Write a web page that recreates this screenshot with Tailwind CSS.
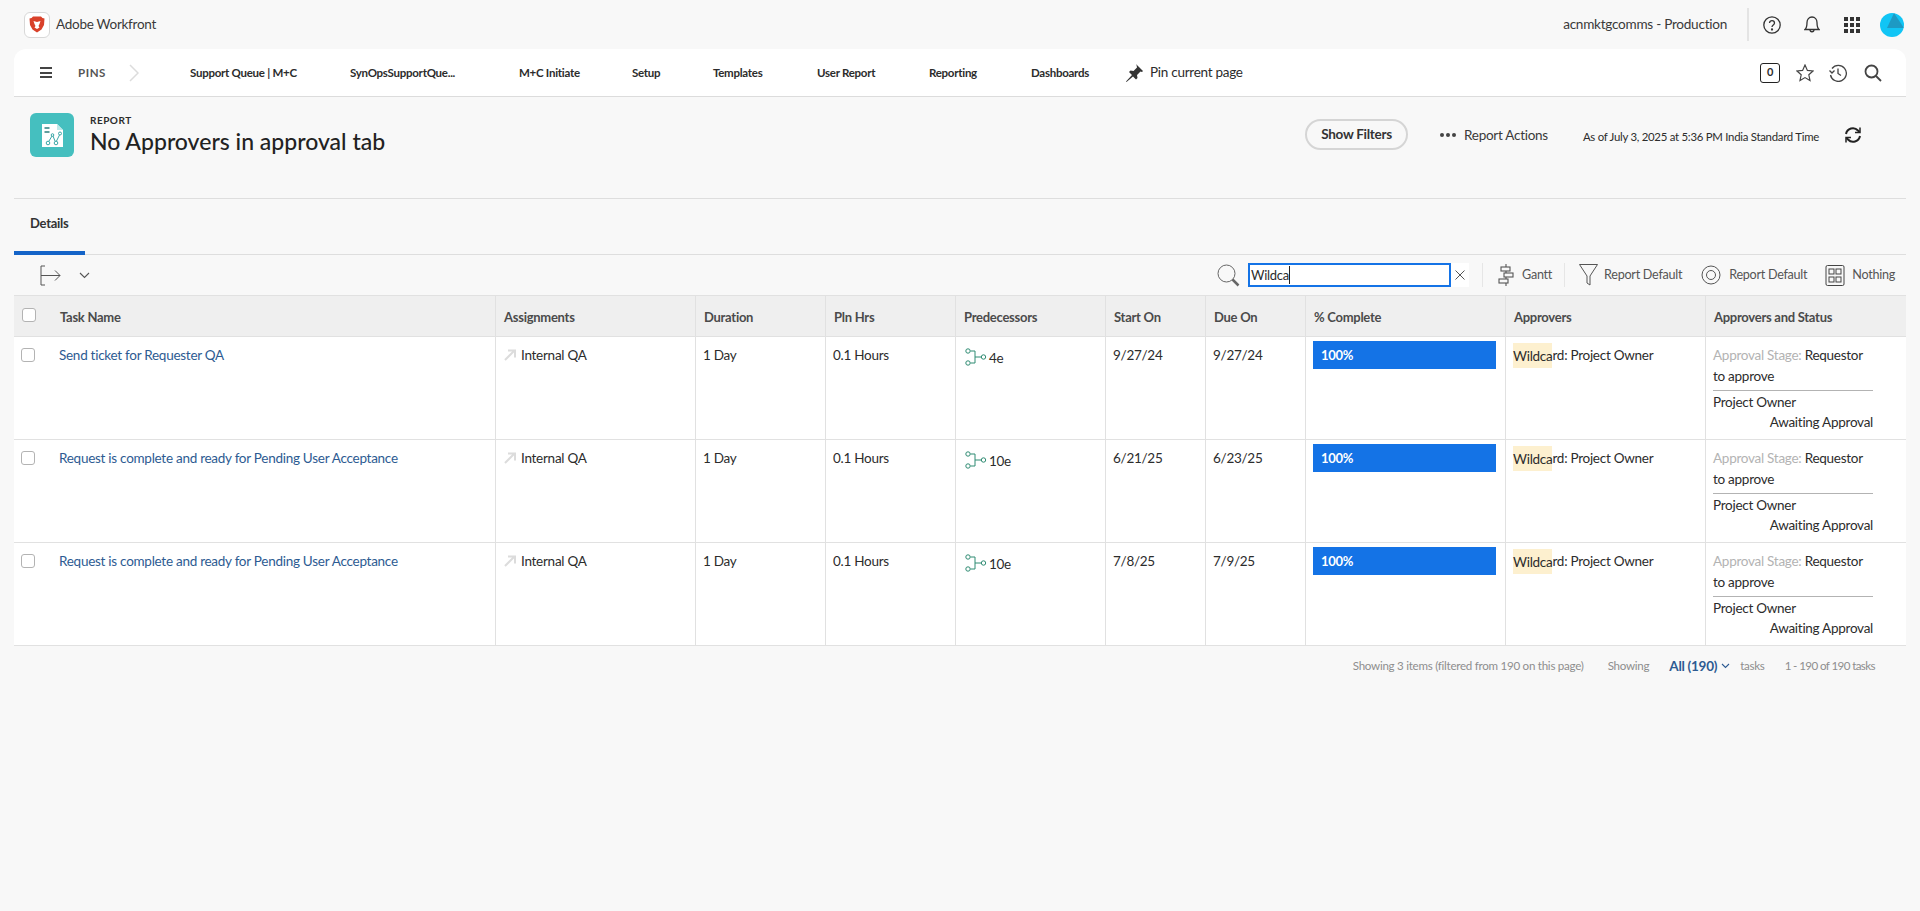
<!DOCTYPE html>
<html lang="en">

<head>
    <meta charset="UTF-8">
    <meta name="viewport" content="width=device-width, initial-scale=1.0">
    <title>No Approvers in approval tab</title>
    <script src="https://cdn.jsdelivr.net/npm/@tailwindcss/browser@4"></script>
</head>

<body class="h-[911px] overflow-hidden bg-[#f8f8f8] font-['Lato',sans-serif] tracking-[-0.27px] text-[#2c2c2c]">
    <!-- top bar -->
    <header class="h-[49px] flex items-center pl-6 pr-[16px]">
        <div class="w-[26px] h-[26px] rounded-md border border-[#d8d8d8] bg-white flex items-center justify-center">
            <svg width="16" height="17" viewBox="0 0 16 17"><path d="M4 .5h8l1.500 1.500 2 .5-.5 6.500-2.500 4.500L8 16.500 3.500 13.500 1 9 .5 2.500l2-.5z" fill="#d9412a"/><path d="M4.500 5l3.500 1 3.500-1-1 3-1 2 1 1.500-2.500 1.500-2.500-1.500 1-1.500-1-2z" fill="#fff"/></svg>
        </div>
        <span class="ml-[6px] text-[13.500px] text-[#3a3a3a]">Adobe Workfront</span>
        <span class="ml-auto text-[13.600px] text-[#3a3a3a]">acnmktgcomms - Production</span>
        <span class="w-[2px] h-[33px] bg-[#e4e4e4] ml-5"></span>
        <svg class="ml-[14px]" width="18" height="18" viewBox="0 0 18 18" fill="none" stroke="#333" stroke-width="1.300"><circle cx="9" cy="9" r="8.200"/><path d="M6.500 7c0-3.300 5-3.300 5 0 0 2-2.500 2-2.500 4"/><circle cx="9" cy="13.500" r=".5" fill="#333"/></svg>
        <svg class="ml-[23px]" width="16" height="17" viewBox="0 0 16 17" fill="none" stroke="#333" stroke-width="1.300"><path d="M1 13.500c2-2 2-4 2-7 0-3 2-5.500 5-5.500s5 2.500 5 5.500c0 3 0 5 2 7z"/><path d="M6 13.500c0 3 4 3 4 0"/></svg>
        <div class="ml-[24px] grid grid-cols-3 gap-[2px]">
            <span class="w-[4px] h-[4px] bg-[#333]"></span><span class="w-[4px] h-[4px] bg-[#333]"></span><span class="w-[4px] h-[4px] bg-[#333]"></span>
            <span class="w-[4px] h-[4px] bg-[#333]"></span><span class="w-[4px] h-[4px] bg-[#333]"></span><span class="w-[4px] h-[4px] bg-[#333]"></span>
            <span class="w-[4px] h-[4px] bg-[#333]"></span><span class="w-[4px] h-[4px] bg-[#333]"></span><span class="w-[4px] h-[4px] bg-[#333]"></span>
        </div>
        <svg class="ml-[20px]" width="24" height="24" viewBox="0 0 24 24"><clipPath id="avatar-clip"><circle cx="12" cy="12" r="12"/></clipPath><circle cx="12" cy="12" r="12" fill="#11c5f5"/><path d="M14 0l10 15H7z" fill="#1d9ac4" clip-path="url(#avatar-clip)"/></svg>
    </header>

    <main class="mx-[14px]">
        <!-- pins nav -->
        <nav class="h-[48px] bg-white rounded-t-xl border-b border-[#dcdcdc] flex items-center pl-[26px] pr-6">
            <div class="w-3 flex flex-col gap-[2.500px]">
                <span class="h-[2px] bg-[#444]"></span><span class="h-[2px] bg-[#444]"></span><span class="h-[2px] bg-[#444]"></span>
            </div>
            <span class="ml-[26px] text-[11.500px] font-bold tracking-wider text-[#555]">PINS</span>
            <svg class="ml-[23px]" width="10" height="18" viewBox="0 0 10 18" fill="none" stroke="#dcdcdc" stroke-width="1.500"><path d="M1 1l8 8-8 8"/></svg>
            <div class="ml-[51px] flex items-center text-[11.500px] font-bold text-[#2c2c2c]">
                <span class="w-[160px]">Support Queue | M+C</span>
                <span class="w-[169px]">SynOpsSupportQue...</span>
                <span class="w-[113px]">M+C Initiate</span>
                <span class="w-[81px]">Setup</span>
                <span class="w-[104px]">Templates</span>
                <span class="w-[112px]">User Report</span>
                <span class="w-[102px]">Reporting</span>
                <span class="w-[94px]">Dashboards</span>
            </div>
            <svg width="19" height="19" viewBox="0 0 19 19" fill="#333"><path d="M11 1l7 7-1 1-1.500-.5-3.500 3.500.5 3-1.500 1.500-3-3-6.500 5.500-.5-.5L7 12 4 9l1.500-1.500 3 .5L12 4.500 11.500 2z"/></svg>
            <span class="ml-[6px] text-[13.500px] text-[#2c2c2c]">Pin current page</span>
            <span class="ml-auto w-5 h-[20px] border border-[#222] rounded-[3px] flex items-center justify-center text-[11px] font-bold">0</span>
            <svg class="ml-4" width="18" height="18" viewBox="0 0 18 18" fill="none" stroke="#444" stroke-width="1.200"><path d="M9 1l2.400 5.400 5.600.6-4.200 3.800 1.200 5.700L9 13.600l-5 2.900 1.200-5.700L1 7l5.600-.6z"/></svg>
            <svg class="ml-[15px]" width="18" height="18" viewBox="0 0 18 18" fill="none" stroke="#444" stroke-width="1.300"><path d="M3 4.500A8 8 0 1 1 1.500 11"/><path d="M.5 6.500L3 9l2.500-2.500"/><path d="M9 4.500V9.500l3 2"/></svg>
            <svg class="ml-[17px]" width="18" height="18" viewBox="0 0 18 18" fill="none" stroke="#444" stroke-width="1.800"><circle cx="7.500" cy="7.500" r="6"/><path d="M12 12l5 5"/></svg>
        </nav>

        <!-- report header -->
        <section class="h-[102px] border-b border-[#dedede] flex items-start pl-4 pr-[44px] pt-4">
            <div class="w-11 h-11 rounded-md bg-[#45bfbf] flex items-center justify-center">
                <svg width="21" height="23" viewBox="0 0 21 23"><path d="M0 0h15l6 6v17H0z" fill="#fff"/><path d="M15 0l6 6h-6z" fill="#bfe9e9"/><path d="M2.500 4h5M2.500 8h5" stroke="#2c7f7f" stroke-width="1.500"/><g fill="none" stroke="#3aa7a7" stroke-width="1"><path d="M7 17l3-5M11 12l2 5M14.500 17l3-6"/><circle cx="6" cy="19" r="1.800"/><circle cx="10.500" cy="11" r="1.300"/><circle cx="14" cy="19" r="1.800"/><circle cx="18" cy="9.500" r="1.500"/></g></svg>
            </div>
            <div class="ml-4 -mt-[3px]">
                <div class="text-[10px] font-bold tracking-wider leading-[14px] mt-[3px]">REPORT</div>
                <h1 class="text-[23px] font-medium leading-[28px] tracking-normal text-[#222]">No Approvers in approval tab</h1>
            </div>
            <button class="ml-auto mt-[6px] h-[31px] w-[103px] rounded-full border-2 border-[#d5d5d5] text-[13.500px] font-bold text-[#333]">Show Filters</button>
            <div class="ml-8 mt-[12px] flex items-center gap-[2px]">
                <span class="w-[4px] h-[4px] rounded-full bg-[#444]"></span><span class="w-[4px] h-[4px] rounded-full bg-[#444]"></span><span class="w-[4px] h-[4px] rounded-full bg-[#444]"></span>
                <span class="ml-[6px] text-[13.500px] text-[#3a3a3a]">Report Actions</span>
            </div>
            <span class="ml-[35px] mt-[15px] text-[11.400px] text-[#2c2c2c]">As of July 3, 2025 at 5:36 PM India Standard Time</span>
            <svg class="ml-[25px] mt-[13px]" width="18" height="18" viewBox="0 0 18 18" fill="none" stroke="#222" stroke-width="2"><path d="M2 8a7 7 0 0 1 12-3.500L15.500 6"/><path d="M16 10a7 7 0 0 1-12 3.500L2.500 12"/><path d="M16 1.500V6.500H11M2 16.500V11.500H7" stroke-width="1.500"/></svg>
        </section>

        <!-- tabs -->
        <div class="h-[56px] border-b border-[#dedede] flex">
            <div class="w-[71px] border-b-4 border-[#1464c8] -mb-px pl-4 pt-[15px] text-[13px] font-bold text-[#333]">Details</div>
        </div>

        <!-- toolbar -->
        <div class="h-[40px] flex items-center pl-[26px] pr-[11px] text-[12.600px] text-[#555]">
            <svg width="21" height="21" viewBox="0 0 21 21" fill="none" stroke="#555" stroke-width="1"><path d="M5 1H1v19h4"/><path d="M1 10.500h19M15 5.500l5 5-5 5"/></svg>
            <svg class="ml-[18px]" width="11" height="7" viewBox="0 0 11 7" fill="none" stroke="#555" stroke-width="1.100"><path d="M1 1l4.500 4.500L10 1"/></svg>
            <svg class="ml-auto" width="23" height="23" viewBox="0 0 23 23" fill="none" stroke="#666" stroke-width="1"><circle cx="9.500" cy="9.500" r="8.500"/><path d="M15.500 15.500l6 6" stroke-width="2.500"/></svg>
            <div class="ml-2 flex items-center bg-white h-6">
                <div class="w-[203px] h-6 border-2 border-[#1473e6] px-[1px] flex items-center text-[13px] text-[#2c2c2c]"><span class="border-r border-[#222] leading-[18px]">Wildca</span></div>
                <svg class="mx-[4px] w-[10px] h-[10px]" viewBox="0 0 10 10" fill="none" stroke="#555" stroke-width="1"><path d="M.5.500l9 9M9.500.500l-9 9"/></svg>
            </div>
            <span class="w-px h-6 bg-[#e6e6e6] ml-[13px]"></span>
            <svg class="ml-[15px]" width="16" height="22" viewBox="0 0 16 22" fill="none" stroke="#555" stroke-width="1.100"><path d="M8 0v22"/><rect x="3" y="3" width="9" height="4" fill="#f8f8f8"/><rect x="6" y="9" width="9" height="4" fill="#f8f8f8"/><rect x="1" y="15" width="9" height="4" fill="#f8f8f8"/></svg>
            <span class="ml-[8px]">Gantt</span>
            <span class="w-px h-6 bg-[#e6e6e6] ml-3"></span>
            <svg class="ml-[14px]" width="19" height="22" viewBox="0 0 19 22" fill="none" stroke="#555" stroke-width="1"><path d="M.5.500h18L11 12v9l-3-2v-7z"/></svg>
            <span class="ml-[6px]">Report Default</span>
            <svg class="ml-[19px]" width="20" height="20" viewBox="0 0 20 20" fill="none" stroke="#555" stroke-width="1"><circle cx="10" cy="10" r="9"/><circle cx="10" cy="10" r="4.500"/></svg>
            <span class="ml-[8px]">Report Default</span>
            <svg class="ml-[18px]" width="20" height="21" viewBox="0 0 19 21" fill="none" stroke="#444" stroke-width="1"><rect x=".5" y=".5" width="18" height="20" rx="1.500"/><rect x="3.500" y="4" width="5" height="5"/><rect x="10.500" y="4" width="5" height="5"/><rect x="3.500" y="12" width="5" height="5"/><rect x="10.500" y="12" width="5" height="5"/></svg>
            <span class="ml-[7px]">Nothing</span>
        </div>

        <!-- table -->
        <div class="border-t border-b border-[#e1e1e1] text-[13.500px]">
            <div class="grid grid-cols-[482px_200px_130px_130px_150px_100px_100px_200px_200px_200px] h-[41px] bg-[#efefef] border-b border-[#e1e1e1] items-stretch text-[13px] font-bold text-[#4b4b4b]">
                <div class="border-r border-[#e1e1e1] flex items-center pl-2"><span class="w-[14px] h-[14px] rounded-[3px] border border-[#b3b3b3] bg-white -mt-[2px]"></span><span class="ml-[24px] pt-[3px]">Task Name</span></div>
                <div class="border-r border-[#e1e1e1] flex items-center pl-2 pt-[3px]">Assignments</div>
                <div class="border-r border-[#e1e1e1] flex items-center pl-2 pt-[3px]">Duration</div>
                <div class="border-r border-[#e1e1e1] flex items-center pl-2 pt-[3px]">Pln Hrs</div>
                <div class="border-r border-[#e1e1e1] flex items-center pl-2 pt-[3px]">Predecessors</div>
                <div class="border-r border-[#e1e1e1] flex items-center pl-2 pt-[3px]">Start On</div>
                <div class="border-r border-[#e1e1e1] flex items-center pl-2 pt-[3px]">Due On</div>
                <div class="border-r border-[#e1e1e1] flex items-center pl-2 pt-[3px]">% Complete</div>
                <div class="border-r border-[#e1e1e1] flex items-center pl-2 pt-[3px]">Approvers</div>
                <div class="flex items-center pl-2 pt-[3px]">Approvers and Status</div>
            </div>

            <div class="grid grid-cols-[482px_200px_130px_130px_150px_100px_100px_200px_200px_200px] h-[103px] bg-white border-b border-[#e1e1e1]">
                <div class="border-r border-[#e1e1e1] pt-2 pl-[7px] flex items-start"><span class="mt-[3px] w-[14px] h-[14px] rounded-[3px] border border-[#b3b3b3]"></span><span class="ml-[24px] leading-5 text-[#2d5b92]">Send ticket for Requester QA</span></div>
                <div class="border-r border-[#e1e1e1] pt-2 pl-2 flex items-start leading-5"><svg class="mt-1 shrink-0" width="12" height="12" viewBox="0 0 12 12" fill="none" stroke="#dcdcdc" stroke-width="2"><path d="M1 11l9-9M4 1.500h7v7"/></svg><span class="ml-[5px]">Internal QA</span></div>
                <div class="border-r border-[#e1e1e1] pt-2 pl-[7px] leading-5">1 Day</div>
                <div class="border-r border-[#e1e1e1] pt-2 pl-[7px] leading-5">0.1 Hours</div>
                <div class="border-r border-[#e1e1e1] pt-2 pl-[9px] flex items-start leading-5"><svg class="mt-[3px] shrink-0" width="22" height="18" viewBox="0 0 22 18" fill="none" stroke="#2e8b72" stroke-width="1"><circle cx="3" cy="3" r="2.200"/><circle cx="3" cy="15" r="2.200"/><circle cx="18.500" cy="9" r="2.200"/><path d="M5.500 3H10v12H5.500M10 9h6"/></svg><span class="ml-[2px] mt-[3px]">4e</span></div>
                <div class="border-r border-[#e1e1e1] pt-2 pl-[7px] leading-5">9/27/24</div>
                <div class="border-r border-[#e1e1e1] pt-2 pl-[7px] leading-5">9/27/24</div>
                <div class="border-r border-[#e1e1e1] pt-1 pl-[7px] pr-[9px]"><div class="h-[28px] bg-[#1473e6] flex items-center pl-2 pt-[1px] text-[13px] font-bold text-white">100%</div></div>
                <div class="border-r border-[#e1e1e1] pt-2 pl-[7px] leading-5"><span class="bg-[#fdf0cf] py-[4.500px]">Wildca</span>rd: Project Owner</div>
                <div class="pt-2 pl-[7px] pr-[33px] leading-[20.500px]">
                    <div class="border-b border-[#b3b3b3] pb-[4px] whitespace-nowrap"><span class="text-[#b3b3b3]">Approval Stage:</span> Requestor<br>to approve</div>
                    <div class="pt-[1px]">Project Owner</div>
                    <div class="text-right -mt-[1px]">Awaiting Approval</div>
                </div>
            </div>

            <div class="grid grid-cols-[482px_200px_130px_130px_150px_100px_100px_200px_200px_200px] h-[103px] bg-white border-b border-[#e1e1e1]">
                <div class="border-r border-[#e1e1e1] pt-2 pl-[7px] flex items-start"><span class="mt-[3px] w-[14px] h-[14px] rounded-[3px] border border-[#b3b3b3]"></span><span class="ml-[24px] leading-5 text-[#2d5b92]">Request is complete and ready for Pending User Acceptance</span></div>
                <div class="border-r border-[#e1e1e1] pt-2 pl-2 flex items-start leading-5"><svg class="mt-1 shrink-0" width="12" height="12" viewBox="0 0 12 12" fill="none" stroke="#dcdcdc" stroke-width="2"><path d="M1 11l9-9M4 1.500h7v7"/></svg><span class="ml-[5px]">Internal QA</span></div>
                <div class="border-r border-[#e1e1e1] pt-2 pl-[7px] leading-5">1 Day</div>
                <div class="border-r border-[#e1e1e1] pt-2 pl-[7px] leading-5">0.1 Hours</div>
                <div class="border-r border-[#e1e1e1] pt-2 pl-[9px] flex items-start leading-5"><svg class="mt-[3px] shrink-0" width="22" height="18" viewBox="0 0 22 18" fill="none" stroke="#2e8b72" stroke-width="1"><circle cx="3" cy="3" r="2.200"/><circle cx="3" cy="15" r="2.200"/><circle cx="18.500" cy="9" r="2.200"/><path d="M5.500 3H10v12H5.500M10 9h6"/></svg><span class="ml-[2px] mt-[3px]">10e</span></div>
                <div class="border-r border-[#e1e1e1] pt-2 pl-[7px] leading-5">6/21/25</div>
                <div class="border-r border-[#e1e1e1] pt-2 pl-[7px] leading-5">6/23/25</div>
                <div class="border-r border-[#e1e1e1] pt-1 pl-[7px] pr-[9px]"><div class="h-[28px] bg-[#1473e6] flex items-center pl-2 pt-[1px] text-[13px] font-bold text-white">100%</div></div>
                <div class="border-r border-[#e1e1e1] pt-2 pl-[7px] leading-5"><span class="bg-[#fdf0cf] py-[4.500px]">Wildca</span>rd: Project Owner</div>
                <div class="pt-2 pl-[7px] pr-[33px] leading-[20.500px]">
                    <div class="border-b border-[#b3b3b3] pb-[4px] whitespace-nowrap"><span class="text-[#b3b3b3]">Approval Stage:</span> Requestor<br>to approve</div>
                    <div class="pt-[1px]">Project Owner</div>
                    <div class="text-right -mt-[1px]">Awaiting Approval</div>
                </div>
            </div>

            <div class="grid grid-cols-[482px_200px_130px_130px_150px_100px_100px_200px_200px_200px] h-[102px] bg-white">
                <div class="border-r border-[#e1e1e1] pt-2 pl-[7px] flex items-start"><span class="mt-[3px] w-[14px] h-[14px] rounded-[3px] border border-[#b3b3b3]"></span><span class="ml-[24px] leading-5 text-[#2d5b92]">Request is complete and ready for Pending User Acceptance</span></div>
                <div class="border-r border-[#e1e1e1] pt-2 pl-2 flex items-start leading-5"><svg class="mt-1 shrink-0" width="12" height="12" viewBox="0 0 12 12" fill="none" stroke="#dcdcdc" stroke-width="2"><path d="M1 11l9-9M4 1.500h7v7"/></svg><span class="ml-[5px]">Internal QA</span></div>
                <div class="border-r border-[#e1e1e1] pt-2 pl-[7px] leading-5">1 Day</div>
                <div class="border-r border-[#e1e1e1] pt-2 pl-[7px] leading-5">0.1 Hours</div>
                <div class="border-r border-[#e1e1e1] pt-2 pl-[9px] flex items-start leading-5"><svg class="mt-[3px] shrink-0" width="22" height="18" viewBox="0 0 22 18" fill="none" stroke="#2e8b72" stroke-width="1"><circle cx="3" cy="3" r="2.200"/><circle cx="3" cy="15" r="2.200"/><circle cx="18.500" cy="9" r="2.200"/><path d="M5.500 3H10v12H5.500M10 9h6"/></svg><span class="ml-[2px] mt-[3px]">10e</span></div>
                <div class="border-r border-[#e1e1e1] pt-2 pl-[7px] leading-5">7/8/25</div>
                <div class="border-r border-[#e1e1e1] pt-2 pl-[7px] leading-5">7/9/25</div>
                <div class="border-r border-[#e1e1e1] pt-1 pl-[7px] pr-[9px]"><div class="h-[28px] bg-[#1473e6] flex items-center pl-2 pt-[1px] text-[13px] font-bold text-white">100%</div></div>
                <div class="border-r border-[#e1e1e1] pt-2 pl-[7px] leading-5"><span class="bg-[#fdf0cf] py-[4.500px]">Wildca</span>rd: Project Owner</div>
                <div class="pt-2 pl-[7px] pr-[33px] leading-[20.500px]">
                    <div class="border-b border-[#b3b3b3] pb-[4px] whitespace-nowrap"><span class="text-[#b3b3b3]">Approval Stage:</span> Requestor<br>to approve</div>
                    <div class="pt-[1px]">Project Owner</div>
                    <div class="text-right -mt-[1px]">Awaiting Approval</div>
                </div>
            </div>
        </div>

        <!-- footer -->
        <div class="h-10 flex items-center justify-end pr-[31px] text-[11.600px] text-[#8e8e8e]">
            <span>Showing 3 items (filtered from 190 on this page)</span>
            <span class="ml-6">Showing</span>
            <span class="ml-5 text-[13.500px] font-bold text-[#2d5b92]">All (190)</span>
            <svg class="ml-1" width="9" height="6" viewBox="0 0 9 6" fill="none" stroke="#2d5b92" stroke-width="1.100"><path d="M1 1l3.500 3.500L8 1"/></svg>
            <span class="ml-[10px]">tasks</span>
            <span class="ml-5 tracking-[-0.6px]">1 - 190 of 190 tasks</span>
        </div>
    </main>
</body>

</html>
